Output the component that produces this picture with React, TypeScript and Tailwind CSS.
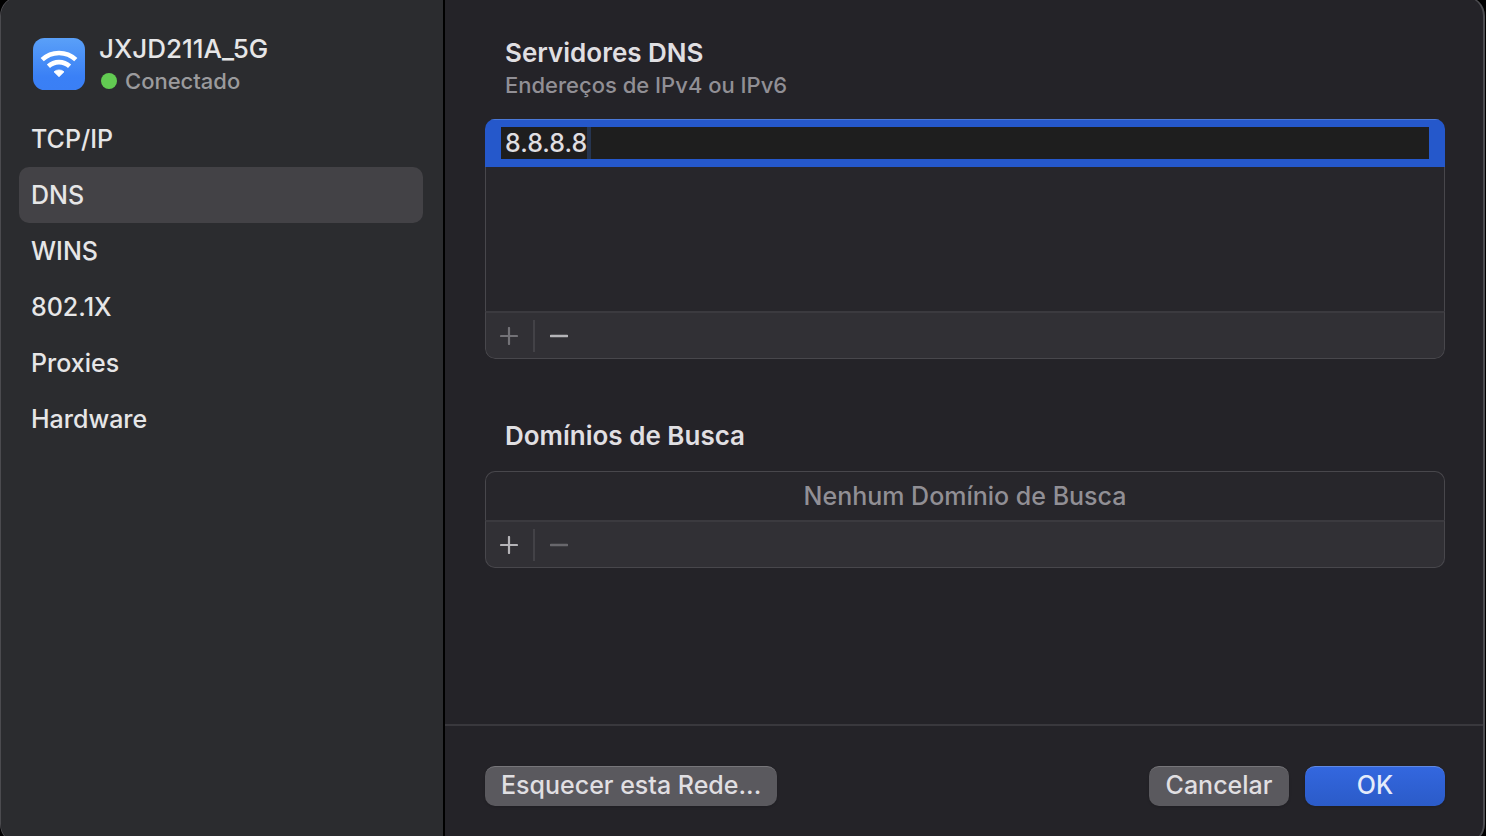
import React, { useState } from 'react'

const sections = ['TCP/IP', 'DNS', 'WINS', '802.1X', 'Proxies', 'Hardware']

const WifiIcon: React.FC = () => (
  <svg viewBox="0 0 52 52" className="h-[52px] w-[52px] shrink-0" aria-hidden="true">
    <defs>
      <linearGradient id="wifi-bg" x1="0" y1="0" x2="0" y2="1">
        <stop offset="0" stopColor="#5aa0f8" />
        <stop offset="0.75" stopColor="#3a80f6" />
        <stop offset="1" stopColor="#3a7ff5" />
      </linearGradient>
    </defs>
    <rect width="52" height="52" rx="11.5" fill="url(#wifi-bg)" />
    <g fill="none" stroke="#fff" strokeWidth="4.6">
      <path d="M9.2 21.7A24.5 24.5 0 0 1 42.8 21.7" />
      <path d="M15.4 28.3A15.5 15.5 0 0 1 36.6 28.3" />
    </g>
    <path
      d="M21 33.8A7.6 7.6 0 0 1 31 33.8L26 38.7Z"
      fill="#fff"
      stroke="#fff"
      strokeWidth="0.8"
      strokeLinejoin="round"
    />
  </svg>
)

type ListToolbarProps = {
  label: string
  canAdd?: boolean
  canRemove?: boolean
}

const ListToolbar: React.FC<ListToolbarProps> = ({ label, canAdd, canRemove }) => (
  <div className="flex h-12 items-center rounded-b-[10px] border border-t-2 border-[#48474c] border-t-[#3b3a3f] bg-[#313035]">
    <button
      type="button"
      aria-label={`Adicionar ${label}`}
      disabled={!canAdd}
      className="flex h-8 w-[47px] items-center justify-center pr-px text-[#b5b4b8] disabled:text-[#737277]"
    >
      <svg viewBox="0 0 18 18" className="h-[18px] w-[18px]" stroke="currentColor" strokeWidth="2.2" strokeLinecap="round">
        <path d="M1 9H17M9 1V17" />
      </svg>
    </button>
    <span className="h-8 w-0.5 bg-[#434247]" />
    <button
      type="button"
      aria-label={`Remover ${label}`}
      disabled={!canRemove}
      className="flex h-8 w-12 items-center justify-center text-[#b5b4b8] disabled:text-[#68676c]"
    >
      <svg viewBox="0 0 18 18" className="h-[18px] w-[18px]" stroke="currentColor" strokeWidth="2.6" strokeLinecap="round">
        <path d="M1 9H17" />
      </svg>
    </button>
  </div>
)

const Sidebar: React.FC = () => {
  const [active, setActive] = useState('DNS')

  return (
    <aside className="w-[444px] shrink-0 border-r-2 border-black bg-[#2b2c2f] pt-[41px] pr-5 pl-[18px]">
      <div className="flex gap-3.5 pl-3.5">
        <WifiIcon />
        <div className="-mt-1">
          <h1 className="text-[26px] leading-[30px] text-[#e6e6e7]">JXJD211A_5G</h1>
          <p className="flex items-center gap-2 pl-0.5 text-[22px] leading-[34px] text-[#9b9b9d]">
            <span className="h-4 w-4 rounded-full bg-[#62cb52]" />
            Conectado
          </p>
        </div>
      </div>
      <nav className="mt-[13px] flex flex-col">
        {sections.map((name) => (
          <button
            key={name}
            type="button"
            onClick={() => setActive(name)}
            className={`h-14 rounded-[10px] px-3 pt-0.5 text-left text-[#e6e6e7] ${name === active ? 'bg-[#434246]' : ''}`}
          >
            {name}
          </button>
        ))}
      </nav>
    </aside>
  )
}

export const App: React.FC = () => {
  const [server, setServer] = useState('8.8.8.8')

  return (
    <div className="flex min-h-screen overflow-hidden bg-black pr-px font-['Inter',sans-serif] text-[25px] font-medium text-[#e0dfe2]">
      {/* the sheet runs slightly past the top and bottom of the window */}
      <div className="-mt-1 -mb-2 flex flex-1 overflow-hidden rounded-[20px] border border-r-2 border-[#4b4b4f] bg-[#242328]">
        <Sidebar />
        <main className="flex min-w-0 flex-1 flex-col">
          <div className="flex-1 px-10 pt-[39px] pr-[38px]">
            <section>
              <h2 className="pl-5 text-[26px] font-semibold leading-[34px]">
                <label htmlFor="dns-server">Servidores DNS</label>
              </h2>
              <p className="pl-5 text-[22px] leading-[30px] text-[#918f95]">Endereços de IPv4 ou IPv6</p>
              <div className="mt-[19px] overflow-hidden rounded-[10px]">
                <div className="flex h-12 items-center bg-[#2558cb] px-4 shadow-[inset_0_1px_0_#4a78d8]">
                  <div className="flex h-8 w-full items-center bg-[#1e1e1e]">
                    <input
                      id="dns-server"
                      value={server}
                      onChange={(e) => setServer(e.target.value)}
                      className="h-8 w-[86px] bg-transparent pt-0.5 pl-1 outline-none"
                    />
                    <span className="h-8 w-1 bg-[#263550]" />
                  </div>
                </div>
                <div className="h-36 border-x border-[#48474c] bg-[#27262b]" />
                <ListToolbar label="servidor DNS" canRemove />
              </div>
            </section>
            <section className="mt-[60px]">
              <h2 className="pl-5 text-[26px] font-semibold leading-[34px]">Domínios de Busca</h2>
              <div className="mt-[18px]">
                <p className="rounded-t-[10px] border border-b-0 border-[#48474c] bg-[#27262b] text-center leading-[48px] text-[#918f95]">
                  Nenhum Domínio de Busca
                </p>
                <ListToolbar label="domínio de busca" canAdd />
              </div>
            </section>
          </div>
          <footer className="flex gap-4 border-t-2 border-[#39383d] px-10 pt-10 pr-[38px] pb-[37px]">
            <button type="button" className="mr-auto h-10 rounded-[10px] border-t border-[#77767a] bg-[#5a595e] px-4 pb-1 leading-[34px] shadow-sm">
              Esquecer esta Rede...
            </button>
            <button type="button" className="h-10 w-[140px] rounded-[10px] border-t border-[#77767a] bg-[#5a595e] pb-1 leading-[34px] shadow-sm">
              Cancelar
            </button>
            <button
              type="button"
              className="h-10 w-[140px] rounded-[10px] border-t border-[#6089e4] bg-linear-to-b from-[#3367df] to-[#2b5bc8] pb-1 leading-[34px] text-[#e4ebfa] shadow-sm"
            >
              OK
            </button>
          </footer>
        </main>
      </div>
    </div>
  )
}

export default App
